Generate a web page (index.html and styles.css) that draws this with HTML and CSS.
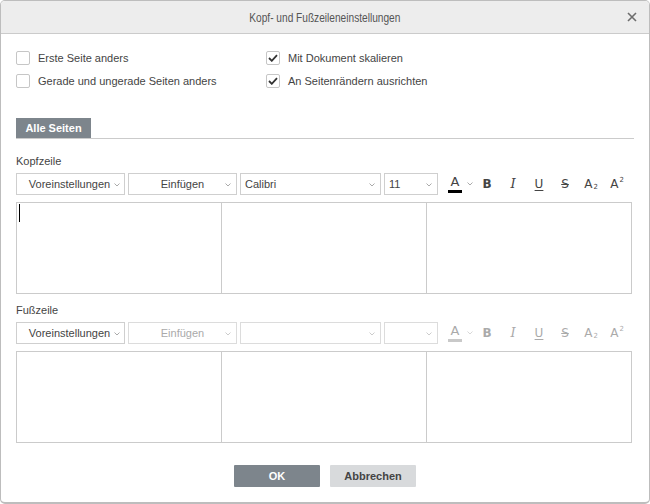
FILE: index.html
```html
<!DOCTYPE html>
<html lang="de">
<head>
<meta charset="utf-8">
<title>Kopf- und Fußzeileneinstellungen</title>
<link rel="stylesheet" href="styles.css">
</head>
<body>
<div class="dialog">
  <div class="header">
    <span class="title">Kopf- und Fußzeileneinstellungen</span>
    <svg class="close" width="10" height="10" viewBox="0 0 10 10"><path d="M1 1L9 9M9 1L1 9" stroke="#6d6d6d" stroke-width="1.6"/></svg>
  </div>
  <div class="body">
    <div class="options">
      <div class="col">
        <label class="check"><span class="box"></span>Erste Seite anders</label>
        <label class="check"><span class="box"></span>Gerade und ungerade Seiten anders</label>
      </div>
      <div class="col">
        <label class="check"><span class="box"><svg width="10" height="8" viewBox="0 0 10 8"><path d="M1 4L3.8 6.8L9 1.2" fill="none" stroke="#333" stroke-width="1.8"/></svg></span>Mit Dokument skalieren</label>
        <label class="check"><span class="box"><svg width="10" height="8" viewBox="0 0 10 8"><path d="M1 4L3.8 6.8L9 1.2" fill="none" stroke="#333" stroke-width="1.8"/></svg></span>An Seitenrändern ausrichten</label>
      </div>
    </div>

    <div class="tabs"><span class="tab">Alle Seiten</span></div>

    <div class="section-label first">Kopfzeile</div>
    <div class="toolbar">
      <div class="combo w-pre"><span class="ctext center">Voreinstellungen</span><svg class="caret" width="6" height="4" viewBox="0 0 6 4"><path d="M0.5 0.5L3 3L5.5 0.5" fill="none" stroke="#aaa"/></svg></div>
      <div class="combo w-ins"><span class="ctext center">Einfügen</span><svg class="caret" width="6" height="4" viewBox="0 0 6 4"><path d="M0.5 0.5L3 3L5.5 0.5" fill="none" stroke="#aaa"/></svg></div>
      <div class="combo w-font"><span class="ctext">Calibri</span><svg class="caret" width="6" height="4" viewBox="0 0 6 4"><path d="M0.5 0.5L3 3L5.5 0.5" fill="none" stroke="#aaa"/></svg></div>
      <div class="combo w-size"><span class="ctext">11</span><svg class="caret" width="6" height="4" viewBox="0 0 6 4"><path d="M0.5 0.5L3 3L5.5 0.5" fill="none" stroke="#aaa"/></svg></div>
      <div class="icons">
        <span class="color"><span class="a">A</span><span class="bar"></span></span>
        <svg class="small-caret" width="6" height="4" viewBox="0 0 6 4"><path d="M0.5 0.5L3 3L5.5 0.5" fill="none" stroke="#aaa"/></svg>
        <span class="ico bold">B</span>
        <span class="ico ital">I</span>
        <span class="ico under">U</span>
        <span class="ico strike">S</span>
        <span class="ico sub">A<small>2</small></span>
        <span class="ico sup">A<small>2</small></span>
      </div>
    </div>
    <div class="editor">
      <div class="cell"><span class="cursor"></span></div>
      <div class="cell"></div>
      <div class="cell"></div>
    </div>

    <div class="section-label">Fußzeile</div>
    <div class="toolbar">
      <div class="combo w-pre"><span class="ctext center">Voreinstellungen</span><svg class="caret" width="6" height="4" viewBox="0 0 6 4"><path d="M0.5 0.5L3 3L5.5 0.5" fill="none" stroke="#aaa"/></svg></div>
      <div class="combo w-ins disabled"><span class="ctext center">Einfügen</span><svg class="caret" width="6" height="4" viewBox="0 0 6 4"><path d="M0.5 0.5L3 3L5.5 0.5" fill="none" stroke="#ccc"/></svg></div>
      <div class="combo w-font disabled"><span class="ctext"></span><svg class="caret" width="6" height="4" viewBox="0 0 6 4"><path d="M0.5 0.5L3 3L5.5 0.5" fill="none" stroke="#ccc"/></svg></div>
      <div class="combo w-size disabled"><span class="ctext"></span><svg class="caret" width="6" height="4" viewBox="0 0 6 4"><path d="M0.5 0.5L3 3L5.5 0.5" fill="none" stroke="#ccc"/></svg></div>
      <div class="icons disabled">
        <span class="color"><span class="a">A</span><span class="bar gray"></span></span>
        <svg class="small-caret" width="6" height="4" viewBox="0 0 6 4"><path d="M0.5 0.5L3 3L5.5 0.5" fill="none" stroke="#aaa"/></svg>
        <span class="ico bold">B</span>
        <span class="ico ital">I</span>
        <span class="ico under">U</span>
        <span class="ico strike">S</span>
        <span class="ico sub">A<small>2</small></span>
        <span class="ico sup">A<small>2</small></span>
      </div>
    </div>
    <div class="editor">
      <div class="cell"></div>
      <div class="cell"></div>
      <div class="cell"></div>
    </div>

    <div class="buttons">
      <button class="btn primary">OK</button>
      <button class="btn secondary">Abbrechen</button>
    </div>
  </div>
</div>
</body>
</html>
```

FILE: styles.css
```css
html, body {
  margin: 0;
  padding: 0;
  background: #fff;
}
body {
  font-family: "Liberation Sans", Arial, sans-serif;
  font-size: 11px;
  color: #444;
}
.dialog {
  width: 650px;
  height: 504px;
  box-sizing: border-box;
  border: 1px solid #bdbdbd;
  border-bottom-width: 2px;
  border-radius: 5px;
  overflow: hidden;
  display: flex;
  flex-direction: column;
}
.header {
  height: 32px;
  flex: none;
  background: #ededed;
  border-bottom: 1px solid #cbcbcb;
  display: flex;
  align-items: center;
  justify-content: center;
  position: relative;
}
.title {
  display: inline-block;
  font-size: 13px;
  color: #555;
  font-weight: normal;
  transform: scaleX(0.78);
}
.close {
  position: absolute;
  right: 12px;
  top: 11px;
}
.body {
  padding: 17px 15px 0 15px;
  display: flex;
  flex-direction: column;
}
.options {
  display: flex;
}
.col {
  display: flex;
  flex-direction: column;
  gap: 9px;
}
.col:first-child {
  width: 250px;
}
.check {
  display: flex;
  align-items: center;
  height: 14px;
  line-height: 14px;
}
.box {
  width: 12px;
  height: 12px;
  border: 1px solid #c6c6c6;
  border-radius: 2px;
  margin-right: 8px;
  display: flex;
  align-items: center;
  justify-content: center;
  background: #fff;
}
.tabs {
  margin-top: 30px;
  border-bottom: 1px solid #cbcbcb;
  display: flex;
  width: 618px;
}
.tab {
  background: #7d858c;
  color: #fff;
  font-weight: bold;
  height: 20px;
  line-height: 20px;
  width: 75px;
  text-align: center;
  white-space: nowrap;
}
.section-label {
  margin-top: 10px;
  height: 13px;
  line-height: 13px;
  margin-bottom: 5px;
}
.section-label.first {
  margin-top: 16px;
}
.toolbar {
  display: flex;
  align-items: center;
  height: 22px;
}
.combo {
  flex: none;
  box-sizing: border-box;
  height: 22px;
  border: 1px solid #cfcfcf;
  display: flex;
  align-items: center;
  position: relative;
  margin-right: 3px;
}
.combo.disabled { border-color: #dcdcdc; }
.ctext {
  flex: 1;
  padding-left: 4px;
  line-height: 20px;
  white-space: nowrap;
}
.ctext.center {
  text-align: center;
  padding-left: 0;
}
.w-pre .ctext.center {
  padding-right: 2px;
}
.caret {
  position: absolute;
  right: 5px;
  top: 9px;
}
.w-pre { width: 109px; }
.w-ins { width: 109px; }
.w-font { width: 141px; }
.w-size { width: 54px; margin-right: 0; }
.w-pre .caret { right: 4px; }
.disabled .ctext { color: #aaa; }
.icons {
  flex: none;
  display: flex;
  align-items: center;
  height: 22px;
  color: #444;
}
.icons.disabled { opacity: 0.45; }
.color {
  margin-left: 10px;
  width: 14px;
  height: 18px;
  display: flex;
  flex-direction: column;
  align-items: center;
}
.color .a {
  font-family: "DejaVu Sans", sans-serif;
  font-size: 13px;
  line-height: 14px;
  height: 14px;
}
.color .bar {
  width: 14px;
  height: 3px;
  background: #000;
  margin-top: 1px;
}
.color .bar.gray { background: #888; }
.small-caret {
  margin-left: 5px;
  margin-right: 1px;
}
.ico {
  width: 26px;
  height: 16px;
  display: flex;
  align-items: center;
  justify-content: center;
  font-family: "DejaVu Sans", sans-serif;
  font-size: 12px;
  line-height: 16px;
  position: relative;
}
.bold {
  font-weight: bold;
}
.ital {
  font-family: "DejaVu Serif", serif;
  font-style: italic;
  font-size: 13px;
}
.under {
  text-decoration: underline;
  text-underline-offset: 2px;
}
.strike {
  text-decoration: line-through;
}
.sub small {
  font-size: 7px;
  align-self: flex-end;
  line-height: 10px;
  margin-left: 1px;
}
.sup small {
  font-size: 7px;
  align-self: flex-start;
  line-height: 8px;
  margin-left: 1px;
}
.editor {
  margin-top: 7px;
  width: 614px;
  height: 90px;
  border: 1px solid #cbcbcb;
  display: grid;
  grid-template-columns: 205px 205px 1fr;
}
.cell {
  border-right: 1px solid #cbcbcb;
  position: relative;
}
.cell:last-child { border-right: none; }
.cursor {
  position: absolute;
  left: 2px;
  top: 1px;
  width: 1px;
  height: 18px;
  background: #000;
}
.buttons {
  margin-top: 22px;
  display: flex;
  justify-content: center;
  gap: 10px;
}
.btn {
  width: 86px;
  height: 22px;
  border: none;
  border-radius: 1px;
  font-family: "Liberation Sans", Arial, sans-serif;
  font-size: 11px;
  font-weight: bold;
  padding: 0;
}
.btn.primary { background: #7d858c; color: #fff; }
.btn.secondary { background: #d8dadc; color: #444; }
```
